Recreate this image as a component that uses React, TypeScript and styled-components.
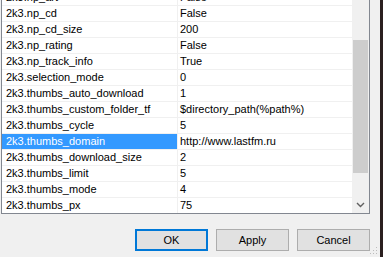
import React from "react";
import styled, { createGlobalStyle } from "styled-components";

const GlobalStyle = createGlobalStyle`
  html, body {
    margin: 0;
    padding: 0;
    background: #f0f0f0;
    overflow: hidden;
  }
  body {
    font-family: "Liberation Sans", Arial, sans-serif;
    font-size: 11px;
    color: #000;
  }
`;

const rows: [string, string][] = [
  ["2k3.np_art", "False"],
  ["2k3.np_cd", "False"],
  ["2k3.np_cd_size", "200"],
  ["2k3.np_rating", "False"],
  ["2k3.np_track_info", "True"],
  ["2k3.selection_mode", "0"],
  ["2k3.thumbs_auto_download", "1"],
  ["2k3.thumbs_custom_folder_tf", "$directory_path(%path%)"],
  ["2k3.thumbs_cycle", "5"],
  ["2k3.thumbs_domain", "http://www.lastfm.ru"],
  ["2k3.thumbs_download_size", "2"],
  ["2k3.thumbs_limit", "5"],
  ["2k3.thumbs_mode", "4"],
  ["2k3.thumbs_px", "75"],
];

const SELECTED = 9;

const Window = styled.div`
  display: flex;
  width: 383px;
  height: 257px;
  overflow: hidden;
`;

const Dialog = styled.div`
  position: relative;
  flex: 1;
  display: flex;
  flex-direction: column;
  padding-left: 1px;
`;

const Edge = styled.div`
  width: 3px;
  background: #2a1f1f;
`;

const ListBox = styled.div`
  box-sizing: border-box;
  margin-top: -12px;
  width: 369px;
  height: 226px;
  border: 1px solid #828790;
  background: #fff;
  display: flex;
`;

const Rows = styled.div`
  width: 350px;
  overflow: hidden;
`;

const Row = styled.div`
  box-sizing: border-box;
  display: flex;
  height: 16px;
  border-top: 1px solid #f0f0f0;
  line-height: 15px;
  white-space: nowrap;
`;

const NameCell = styled.div<{ $selected?: boolean }>`
  box-sizing: border-box;
  width: 176px;
  padding-left: 4px;
  border-right: 1px solid #f0f0f0;
  background: ${(p) => (p.$selected ? "#3399ff" : "transparent")};
  color: ${(p) => (p.$selected ? "#fff" : "#000")};
`;

const ValueCell = styled.div`
  flex: 1;
  padding-left: 2px;
`;

const ScrollBar = styled.div`
  width: 17px;
  background: #f0f0f0;
  display: flex;
  flex-direction: column;
  padding-top: 51px;
  box-sizing: border-box;
`;

const Thumb = styled.div`
  height: 133px;
  margin: 0 1px;
  background: #cdcdcd;
`;

const Spacer = styled.div`
  flex: 1;
`;

const ArrowBox = styled.div`
  height: 17px;
  display: flex;
  align-items: center;
  justify-content: center;
`;

const ButtonRow = styled.div`
  display: flex;
  justify-content: flex-end;
  gap: 8px;
  width: 369px;
  margin-top: 15px;
`;

const Button = styled.button<{ $default?: boolean }>`
  box-sizing: border-box;
  width: 73px;
  height: 22px;
  padding: 0;
  font-family: "Liberation Sans", Arial, sans-serif;
  font-size: 11px;
  color: #000;
  background: #e1e1e1;
  border: ${(p) => (p.$default ? "2px solid #0078d7" : "1px solid #adadad")};
  border-radius: 0;
  outline: none;
`;

const Grip = styled.svg`
  position: absolute;
  right: 2px;
  bottom: 2px;
`;

export default function App() {
  return (
    <>
      <GlobalStyle />
      <Window>
        <Dialog>
          <ListBox>
            <Rows>
              {rows.map(([name, value], i) => (
                <Row key={name}>
                  <NameCell $selected={i === SELECTED}>{name}</NameCell>
                  <ValueCell>{value}</ValueCell>
                </Row>
              ))}
            </Rows>
            <ScrollBar>
              <Thumb />
              <Spacer />
              <ArrowBox>
                <svg width="9" height="6" viewBox="0 0 9 6">
                  <path d="M1 1 L4.5 4.5 L8 1" fill="none" stroke="#606060" strokeWidth="1.4" />
                </svg>
              </ArrowBox>
            </ScrollBar>
          </ListBox>
          <ButtonRow>
            <Button $default>OK</Button>
            <Button>Apply</Button>
            <Button>Cancel</Button>
          </ButtonRow>
          <Grip width="8" height="8" viewBox="0 0 8 8">
            <rect x="6" y="0" width="1" height="1" fill="#bcbcbc" />
            <rect x="3" y="3" width="1" height="1" fill="#bcbcbc" />
            <rect x="6" y="3" width="1" height="1" fill="#bcbcbc" />
            <rect x="0" y="6" width="1" height="1" fill="#bcbcbc" />
            <rect x="3" y="6" width="1" height="1" fill="#bcbcbc" />
            <rect x="6" y="6" width="1" height="1" fill="#bcbcbc" />
          </Grip>
        </Dialog>
        <Edge />
      </Window>
    </>
  );
}
